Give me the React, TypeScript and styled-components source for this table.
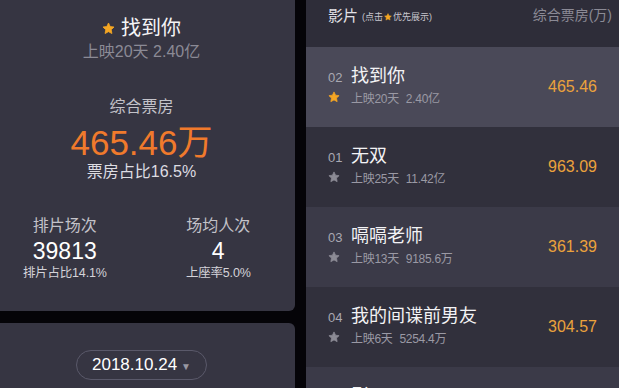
import React from 'react';
import styled, { createGlobalStyle } from 'styled-components';

const ORANGE = '#f07a2c';
const GOLD = '#eba23c';
const STAR_ON = '#f5a623';
const STAR_OFF = '#8c8b95';

const GlobalStyle = createGlobalStyle`
  html, body {
    margin: 0;
    padding: 0;
    background: #050408;
  }
  body {
    font-family: 'Liberation Sans', 'Noto Sans CJK SC', sans-serif;
  }
`;

const Page = styled.div`
  display: flex;
  gap: 11px;
  width: 619px;
  height: 388px;
  overflow: hidden;
  background: #050408;
`;

const LeftColumn = styled.div`
  flex: 0 0 307px;
  margin-left: -12px;
  display: flex;
  flex-direction: column;
  gap: 12px;
`;

const SummaryCard = styled.section`
  height: 311px;
  flex: 0 0 auto;
  background: #363542;
  border-radius: 0 0 6px 0;
  display: flex;
  flex-direction: column;
  align-items: center;
  color: #fff;
`;

const DateCard = styled.section`
  flex: 1;
  background: #363542;
  border-radius: 0 6px 0 0;
  display: flex;
  justify-content: center;
  padding-top: 27px;
`;

const MovieTitle = styled.div`
  margin-top: 14px;
  display: flex;
  align-items: center;
  gap: 6px;
  font-size: 20px;
  line-height: 28px;
  color: #f4f4f6;
`;

const MovieMeta = styled.div`
  font-size: 16px;
  line-height: 20px;
  color: #8b8a95;
`;

const Label = styled.div<{ $top?: number }>`
  margin-top: ${(p) => p.$top ?? 0}px;
  font-size: 16px;
  line-height: 22px;
  color: #c3c2c9;
`;

const BigValue = styled.div`
  margin-top: 5px;
  font-size: 35px;
  line-height: 40px;
  color: ${ORANGE};
`;

const Share = styled.div`
  margin-top: -1px;
  font-size: 16px;
  line-height: 20px;
  color: #dddce1;
`;

const StatsRow = styled.div`
  align-self: stretch;
  margin-top: 33px;
  display: flex;
`;

const Stat = styled.div`
  flex: 1;
  display: flex;
  flex-direction: column;
  align-items: center;
`;

const StatValue = styled.div`
  margin-top: 1px;
  font-size: 23px;
  line-height: 26px;
  color: #fff;
`;

const StatNote = styled.div`
  font-size: 12.5px;
  line-height: 18px;
  color: #d4d3d9;
  letter-spacing: -0.2px;
`;

const DatePill = styled.button`
  height: 30px;
  width: 131px;
  box-sizing: border-box;
  border: 1px solid #5a596a;
  border-radius: 15px;
  background: transparent;
  color: #fff;
  font-family: inherit;
  font-size: 17px;
  display: flex;
  align-items: center;
  justify-content: center;
  gap: 4px;
  padding: 0;
`;

const Caret = styled.span`
  font-size: 10px;
  color: #9998a2;
  margin-top: 2px;
`;

const RankPanel = styled.section`
  flex: 1;
  display: flex;
  flex-direction: column;
  background: #31303c;
`;

const RankHeader = styled.div`
  flex: 0 0 47px;
  box-sizing: border-box;
  display: flex;
  justify-content: space-between;
  align-items: flex-start;
  padding: 5px 7px 0 22px;
  background: #2e2d39;
  font-size: 14px;
  line-height: 20px;
  color: #8b8a95;
`;

const HeaderTitle = styled.div`
  display: flex;
  align-items: center;
  gap: 4px;
  color: #e2e1e6;
  font-size: 15px;
`;

const HeaderHint = styled.span`
  display: flex;
  align-items: center;
  gap: 1px;
  font-size: 9px;
  color: #c8c7ce;
  margin-top: 2px;
`;

const Row = styled.div<{ $tone: 'active' | 'dark' | 'light' }>`
  flex: 0 0 80px;
  box-sizing: border-box;
  display: flex;
  justify-content: space-between;
  align-items: center;
  padding: 0 22px;
  background: ${(p) => (p.$tone === 'active' ? '#4a4958' : p.$tone === 'light' ? '#3b3a48' : '#31303c')};
`;

const RowMain = styled.div`
  display: flex;
  flex-direction: column;
  align-self: flex-start;
  padding-top: 17px;
`;

const TitleLine = styled.div`
  display: flex;
  align-items: baseline;
`;

const Rank = styled.span`
  width: 23px;
  font-size: 13px;
  color: #a9a8b2;
`;

const RowTitle = styled.span`
  font-size: 18px;
  line-height: 24px;
  color: #f3f3f5;
`;

const SubLine = styled.div`
  display: flex;
  align-items: center;
  height: 18px;
  font-size: 12px;
  color: #9a99a4;
  letter-spacing: -0.3px;
`;

const StarSlot = styled.span`
  width: 23px;
  display: flex;
  align-items: center;
`;

const Gross = styled.span`
  margin-left: 7px;
`;

const RowValue = styled.span`
  font-size: 16px;
  color: ${GOLD};
`;

function Star({ size, color }: { size: number; color: string }) {
  return (
    <svg width={size} height={size} viewBox='0 0 24 24'>
      <path
        d='M12 1.8l3.1 6.6 7.1.9-5.2 4.9 1.3 7.1L12 17.8l-6.3 3.5 1.3-7.1-5.2-4.9 7.1-.9z'
        fill={color}
        strokeLinejoin='round'
        stroke={color}
        strokeWidth='1.5'
      />
    </svg>
  );
}

const movies = [
  { rank: '02', title: '找到你', days: '上映20天', gross: '2.40亿', value: '465.46', tone: 'active' as const },
  { rank: '01', title: '无双', days: '上映25天', gross: '11.42亿', value: '963.09', tone: 'dark' as const },
  { rank: '03', title: '嗝嗝老师', days: '上映13天', gross: '9185.6万', value: '361.39', tone: 'light' as const },
  { rank: '04', title: '我的间谍前男友', days: '上映6天', gross: '5254.4万', value: '304.57', tone: 'dark' as const },
  { rank: '05', title: '影', days: '上映25天', gross: '6.12亿', value: '262.18', tone: 'light' as const },
];

export default function App() {
  return (
    <Page>
      <GlobalStyle />
      <LeftColumn>
        <SummaryCard>
          <MovieTitle>
            <Star size={13} color={STAR_ON} />
            找到你
          </MovieTitle>
          <MovieMeta>上映20天 2.40亿</MovieMeta>
          <Label $top={34}>综合票房</Label>
          <BigValue>465.46万</BigValue>
          <Share>票房占比16.5%</Share>
          <StatsRow>
            <Stat>
              <Label>排片场次</Label>
              <StatValue>39813</StatValue>
              <StatNote>排片占比14.1%</StatNote>
            </Stat>
            <Stat>
              <Label>场均人次</Label>
              <StatValue>4</StatValue>
              <StatNote>上座率5.0%</StatNote>
            </Stat>
          </StatsRow>
        </SummaryCard>
        <DateCard>
          <DatePill>
            2018.10.24
            <Caret>▼</Caret>
          </DatePill>
        </DateCard>
      </LeftColumn>
      <RankPanel>
        <RankHeader>
          <HeaderTitle>
            影片
            <HeaderHint>
              (点击 <Star size={8} color={STAR_ON} /> 优先展示)
            </HeaderHint>
          </HeaderTitle>
          <span>综合票房(万)</span>
        </RankHeader>
        {movies.map((m) => (
          <Row key={m.rank} $tone={m.tone}>
            <RowMain>
              <TitleLine>
                <Rank>{m.rank}</Rank>
                <RowTitle>{m.title}</RowTitle>
              </TitleLine>
              <SubLine>
                <StarSlot>
                  <Star size={12} color={m.tone === 'active' ? STAR_ON : STAR_OFF} />
                </StarSlot>
                {m.days}
                <Gross>{m.gross}</Gross>
              </SubLine>
            </RowMain>
            <RowValue>{m.value}</RowValue>
          </Row>
        ))}
      </RankPanel>
    </Page>
  );
}
